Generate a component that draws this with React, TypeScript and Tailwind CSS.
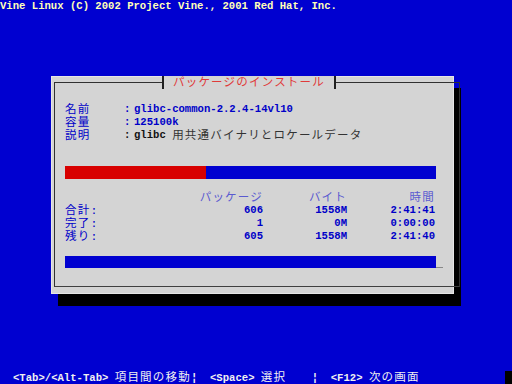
import type { ReactNode } from "react";

// full-width CJK cells: two terminal columns each
function J({ children }: { children: ReactNode }) {
  return (
    <span className="text-[11.5px] leading-[13px] tracking-[1.2px] font-normal">{children}</span>
  );
}

const stats = [
  { label: "合計:", pkgs: "606", bytes: "1558M", time: "2:41:41" },
  { label: "完了:", pkgs: "1", bytes: "0M", time: "0:00:00" },
  { label: "残り:", pkgs: "605", bytes: "1558M", time: "2:41:40" },
];

export default function App() {
  return (
    <div
      className="w-[512px] h-[384px] bg-[#0000d0] flex flex-col overflow-hidden text-[10.6px] leading-[13px]"
      style={{ fontFamily: '"Liberation Mono", "Noto Sans CJK JP", monospace' }}
    >
      <div className="text-[#ffffb8] font-bold whitespace-pre leading-[12px]">
        Vine Linux (C) 2002 Project Vine., 2001 Red Hat, Inc.
      </div>

      <div className="ml-[51px] mt-[64px] w-[403px] h-[218px] bg-[#d4d4d4] border border-[#e6e6e6] shadow-[7px_12px_0_#000] flex">
        <div className="relative flex-1 ml-[2px] mt-[5px] mr-[1px] mb-[6px] border border-[#303030] border-b-[#404040] pl-[10px] pr-[16px] pt-[20px] flex flex-col">
          <div className="absolute left-[107px] top-[-7px] h-[13px] px-[9px] bg-[#d4d4d4] border-l-2 border-r-2 border-[#202020] text-[#e03a3a] flex items-center">
            <J>パッケージのインストール</J>
          </div>

          <div className="flex h-[13px] items-center text-[#0000c8]">
            <span className="w-[59px]"><J>名前</J></span>
            <span className="font-bold w-[10px]">:</span>
            <span className="font-bold whitespace-pre">glibc-common-2.2.4-14vl10</span>
          </div>
          <div className="flex h-[13px] items-center text-[#0000c8]">
            <span className="w-[59px]"><J>容量</J></span>
            <span className="font-bold w-[10px]">:</span>
            <span className="font-bold whitespace-pre">125100k</span>
          </div>
          <div className="flex h-[13px] items-center text-[#0000c8]">
            <span className="w-[59px]"><J>説明</J></span>
            <span className="font-bold w-[10px] text-[#111]">:</span>
            <span className="text-[#111] font-bold whitespace-pre">glibc </span>
            <span className="text-[#333]"><J>用共通バイナリとロケールデータ</J></span>
          </div>

          <div className="mt-[24px] h-[13px] w-[371px] bg-[#0000d0] flex">
            <div className="w-[141px] bg-[#d80000]" />
          </div>

          <div className="mt-[12px] w-[371px] flex flex-col">
            <div className="flex h-[13px] items-center text-[#5a5ad0]">
              <span className="w-[58px]" />
              <span className="w-[140px] text-right"><J>パッケージ</J></span>
              <span className="w-[84px] text-right"><J>バイト</J></span>
              <span className="w-[88px] text-right"><J>時間</J></span>
            </div>
            {stats.map((s) => (
              <div key={s.label} className="flex h-[13px] items-center text-[#0000c8]">
                <span className="w-[58px]"><J>{s.label}</J></span>
                <span className="w-[140px] text-right font-bold">{s.pkgs}</span>
                <span className="w-[84px] text-right font-bold">{s.bytes}</span>
                <span className="w-[88px] text-right font-bold">{s.time}</span>
              </div>
            ))}
          </div>

          <div className="mt-[13px] h-[12px] w-[378px] flex items-end">
            <div className="w-[371px] h-[12px] bg-[#0000d0]" />
            <div className="w-[7px] h-[1px] bg-[#888]" />
          </div>
        </div>
      </div>

      <div className="mt-auto flex items-end h-[13px]">
        <div className="pl-[13px] text-[#f0f0f0] font-bold whitespace-pre leading-[13px] mb-[-1px]">
          {"<Tab>/<Alt-Tab> "}
          <J>項目間の移動</J>
          {"¦  <Space> "}
          <J>選択</J>
          {"    ¦  <F12> "}
          <J>次の画面</J>
        </div>
        <div className="ml-auto w-[7px] h-[13px] bg-black" />
      </div>
    </div>
  );
}
